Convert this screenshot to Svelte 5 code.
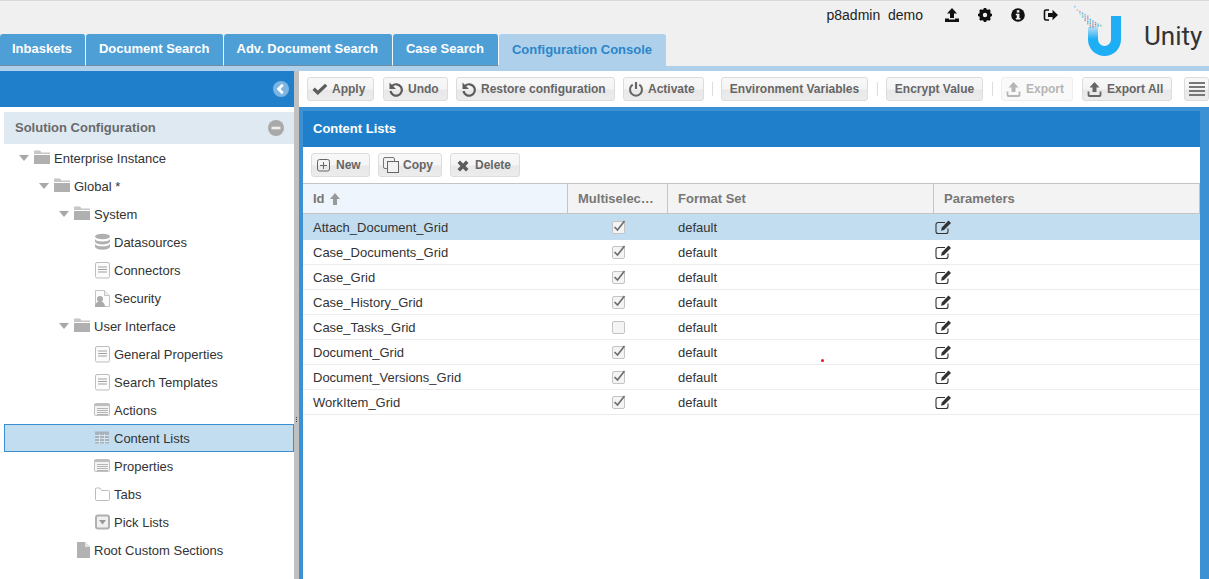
<script>
	const tabs = ['Inbaskets', 'Document Search', 'Adv. Document Search', 'Case Search', 'Configuration Console'];

	const tree = [
		{ label: 'Enterprise Instance', level: 0, icon: 'folder', open: true },
		{ label: 'Global *', level: 1, icon: 'folder', open: true },
		{ label: 'System', level: 2, icon: 'folder', open: true },
		{ label: 'Datasources', level: 3, icon: 'db' },
		{ label: 'Connectors', level: 3, icon: 'doc' },
		{ label: 'Security', level: 3, icon: 'secure' },
		{ label: 'User Interface', level: 2, icon: 'folder', open: true },
		{ label: 'General Properties', level: 3, icon: 'doc' },
		{ label: 'Search Templates', level: 3, icon: 'doc' },
		{ label: 'Actions', level: 3, icon: 'list' },
		{ label: 'Content Lists', level: 3, icon: 'grid', selected: true },
		{ label: 'Properties', level: 3, icon: 'list' },
		{ label: 'Tabs', level: 3, icon: 'tab' },
		{ label: 'Pick Lists', level: 3, icon: 'pick' },
		{ label: 'Root Custom Sections', level: 2, icon: 'file' }
	];

	const rows = [
		{ id: 'Attach_Document_Grid', multi: true, selected: true },
		{ id: 'Case_Documents_Grid', multi: true },
		{ id: 'Case_Grid', multi: true },
		{ id: 'Case_History_Grid', multi: true },
		{ id: 'Case_Tasks_Grid', multi: false },
		{ id: 'Document_Grid', multi: true },
		{ id: 'Document_Versions_Grid', multi: true },
		{ id: 'WorkItem_Grid', multi: true }
	];

	// particles fading off the top of the U
	const colors = ['#1eaef5', '#6cc4ee', '#c9687a', '#6fa8c2', '#d98a8a', '#3db4ee', '#83bd98'];
	const dots = [];
	for (let i = 0; i < 13; i++) {
		const span = Math.floor(i * 0.7);
		for (let k = 0; k <= span; k++) {
			if ((k + i) % 2 === 1) continue;
			dots.push({
				x: 2 + i * 1.3 + k * 1.3,
				y: 2 + i * 1.7 - k * 0.2,
				o: 0.55 + i * 0.035,
				c: colors[(k * 3 + i * 2) % colors.length]
			});
		}
	}
</script>

{#snippet treeIcon(name)}
	<svg class="ticon" width="18" height="18" viewBox="0 0 18 18">
		{#if name === 'folder'}
			<path d="M2 1.500h6l1.500 2H18V5H2z" fill="#c6c6c6" />
			<path d="M2 6h16v9H2z" fill="#b0b0b0" />
		{:else if name === 'db'}
			<ellipse cx="10.500" cy="3.500" rx="7.500" ry="2.800" fill="#b0b0b0" />
			<path d="M3 6c1 1.800 3.700 2.500 7.500 2.500S17 7.800 18 6v2.800c-1 1.800-3.700 2.600-7.500 2.600S4 10.600 3 8.800z" fill="#b0b0b0" />
			<path d="M3 10.700c1 1.800 3.700 2.600 7.500 2.600s6.500-.8 7.500-2.600v3.200c-1 1.800-3.700 2.800-7.500 2.800S4 15.700 3 13.900z" fill="#b0b0b0" />
		{:else if name === 'doc'}
			<rect x="3.500" y="1.500" width="14" height="15.500" rx="1.500" fill="#fbfbfb" stroke="#bdbdbd" />
			<path d="M6 6h9M6 8.500h9M6 11h9" stroke="#a0a0a0" />
		{:else if name === 'secure'}
			<path d="M3.500 1.500h9l5 5v11h-14z" fill="#fbfbfb" stroke="#c4c4c4" />
			<path d="M12.500 1.500v5h5" fill="#eee" stroke="#c4c4c4" />
			<circle cx="8" cy="10" r="3" fill="#aaa" />
			<path d="M3 18c0-3.500 2-5.500 5-5.500s5 2 5 5.500z" fill="#aaa" />
		{:else if name === 'list'}
			<rect x="2.500" y="2.500" width="15" height="12" rx="1" fill="#f3f3f3" stroke="#c0c0c0" />
			<path d="M2.500 3h15v2h-15z" fill="#bdbdbd" />
			<path d="M5 7.500h11M5 9.500h11M5 11.500h11M5 13.500h11" stroke="#b5b5b5" />
		{:else if name === 'grid'}
			<rect x="3" y="2.500" width="14" height="12" fill="#a7b3bc" />
			<path d="M3 6.500h14M3 9.500h14M3 12.500h14M7.500 5v10M12.500 5v10" stroke="#d6e4ee" />
		{:else if name === 'tab'}
			<path d="M3.500 14.500V4a1 1 0 0 1 1-1h3.500l1.500 2.500h7a1 1 0 0 1 1 1v8a1 1 0 0 1-1 1h-12a1 1 0 0 1-1-1z" fill="#fff" stroke="#bdbdbd" />
		{:else if name === 'pick'}
			<rect x="4" y="2.500" width="13" height="13" rx="2" fill="#f0f0f0" stroke="#b0b0b0" stroke-width="2" />
			<path d="M7 7h7l-3.500 4.500z" fill="#999" />
		{:else if name === 'file'}
			<path d="M5 1h8l5 5v11H5z" fill="#b2b2b2" />
			<path d="M13 1v5h5z" fill="#e2e2e2" />
		{/if}
	</svg>
{/snippet}

{#snippet btnIcon(name)}
	<svg class="bicon" width="16" height="16" viewBox="0 0 16 16">
		{#if name === 'check'}
			<path d="M.5 9l2.300-2.400 3 3L13 2.800 15.300 5 5.800 14z" fill="#5c5c5c" />
		{:else if name === 'undo'}
			<path d="M4.200 4.800A5.700 5.700 0 1 1 2.500 10" fill="none" stroke="#5c5c5c" stroke-width="2.200" />
			<path d="M1.500 1.500v6.500h6.500z" fill="#5c5c5c" />
		{:else if name === 'power'}
			<path d="M4.700 3.700a6 6 0 1 0 6.600 0" fill="none" stroke="#666" stroke-width="2" />
			<path d="M8 1v7" stroke="#666" stroke-width="2.200" />
		{:else if name === 'upload'}
			<path d="M7.500 1l5 5.500h-3V11h-4V6.500h-3z" fill="currentColor" />
			<path d="M1.500 10.500V14a1 1 0 0 0 1 1h10a1 1 0 0 0 1-1v-3.500" fill="none" stroke="currentColor" stroke-width="1.800" />
		{:else if name === 'new'}
			<rect x="1.500" y="2.500" width="12" height="11.500" rx="2" fill="none" stroke="#666" />
			<path d="M7.500 5v7M4 8.500h7" stroke="#666" />
		{:else if name === 'copy'}
			<rect x=".5" y=".5" width="11" height="11" rx="1.500" fill="#f2f2f2" stroke="#777" />
			<rect x="4.500" y="4.500" width="11" height="11" fill="#f2f2f2" stroke="#666" />
		{:else if name === 'delete'}
			<path d="M2.500 6l2.500-2.500 3 3 3-3L13.500 6l-3 3 3 3-2.500 2.500-3-3-3 3L2.500 12l3-3z" fill="#5c5c5c" />
		{/if}
	</svg>
{/snippet}

<div class="page">
	<header class="top">
		<div class="top-main">
			<div class="user">
				<span class="names">p8admin&nbsp;&nbsp;demo</span>
				<svg width="16" height="16" viewBox="0 0 16 16"><path d="M8 1l5 5.500H10V11H6V6.500H3z" fill="#111" /><path d="M1 11.500h4v1h6v-1h4V15H1z" fill="#111" /></svg>
				<svg width="16" height="16" viewBox="0 0 16 16"><circle cx="8" cy="8" r="4.500" fill="none" stroke="#111" stroke-width="3" /><path d="M8 1v14M1 8h14M3 3l10 10M13 3L3 13" stroke="#111" stroke-width="2.600" /><circle cx="8" cy="8" r="2.200" fill="#f0f0f0" /></svg>
				<svg width="16" height="16" viewBox="0 0 16 16"><circle cx="8" cy="8" r="6.800" fill="#111" /><rect x="6.800" y="3.200" width="2.600" height="2.400" fill="#f0f0f0" /><path d="M5.800 6.800h3.600v4.200h1v1.400H5.800V11h1V8.200h-1z" fill="#f0f0f0" /></svg>
				<svg width="16" height="16" viewBox="0 0 16 16"><path d="M6 3H3a1.500 1.500 0 0 0-1.500 1.500v7A1.500 1.500 0 0 0 3 13h3" fill="none" stroke="#111" stroke-width="1.600" /><path d="M9.500 2.800L15 8l-5.500 5.200V10H5V6h4.500z" fill="#111" /></svg>
			</div>
			<nav class="tabs">
				{#each tabs as tab, i}
					<div class="tab" class:active={i === 4}>{tab}</div>
				{/each}
			</nav>
		</div>
		<div class="brand">
			<svg class="logo" width="52" height="56" viewBox="0 0 52 56">
				<defs>
					<linearGradient id="arm" x1="0" y1="0" x2="0" y2="1">
						<stop offset="0" stop-color="#1eaef5" stop-opacity="0.25" />
						<stop offset="1" stop-color="#1eaef5" />
					</linearGradient>
				</defs>
				{#each dots as d}
					<rect x={d.x} y={d.y} width="1.500" height="1.500" fill={d.c} opacity={d.o} />
				{/each}
				<path d="M16 23h10v12H16z" fill="url(#arm)" />
				<path d="M16 35v.5a16.500 16.500 0 0 0 33 0V12H39v23.500a6.500 6.500 0 0 1-13 0V35z" fill="#1eaef5" />
			</svg>
			<span class="unity">Unity</span>
		</div>
	</header>
	<div class="band"></div>

	<div class="body">
		<aside class="side">
			<div class="side-head">
				<svg width="16" height="16" viewBox="0 0 16 16"><circle cx="8" cy="8" r="8" fill="#7db5e2" /><path d="M9.800 3.800L5.600 8l4.200 4.200" fill="none" stroke="#fff" stroke-width="2.800" /></svg>
			</div>
			<div class="acc">
				<span>Solution Configuration</span>
				<svg width="16" height="16" viewBox="0 0 16 16"><circle cx="8" cy="8" r="8" fill="#a9a9a9" /><rect x="3.500" y="6.700" width="9" height="2.600" fill="#eee" /></svg>
			</div>
			<div class="tree">
				{#each tree as node}
					<div class="node" class:selected={node.selected} style="padding-left: {50 + 20 * node.level}px">
						<span class="icons">
							{#if node.open}<i class="arrow"></i>{/if}
							{@render treeIcon(node.icon)}
						</span>
						<span>{node.label}</span>
					</div>
				{/each}
			</div>
		</aside>

		<div class="split"><i></i><i></i><i></i></div>

		<main class="main">
			<div class="toolbar">
				<button class="btn w-apply">{@render btnIcon('check')}Apply</button>
				<button class="btn w-undo">{@render btnIcon('undo')}Undo</button>
				<button class="btn w-restore">{@render btnIcon('undo')}Restore configuration</button>
				<button class="btn w-activate">{@render btnIcon('power')}Activate</button>
				<i class="sep"></i>
				<button class="btn plain w-env">Environment Variables</button>
				<i class="sep"></i>
				<button class="btn plain w-enc">Encrypt Value</button>
				<i class="sep"></i>
				<button class="btn off w-export">{@render btnIcon('upload')}Export</button>
				<button class="btn w-all">{@render btnIcon('upload')}Export All</button>
				<button class="btn plain menu">
					<svg width="16" height="14" viewBox="0 0 16 14"><path d="M0 1h16M0 5h16M0 9h16M0 13h16" stroke="#777" stroke-width="2" /></svg>
				</button>
			</div>

			<section class="panel">
				<h2>Content Lists</h2>
				<div class="panel-body">
					<div class="actions">
						<button class="btn w-new">{@render btnIcon('new')}New</button>
						<button class="btn w-copy">{@render btnIcon('copy')}Copy</button>
						<button class="btn w-del">{@render btnIcon('delete')}Delete</button>
					</div>
					<div class="grid-head">
						<div class="th sorted">Id
							<svg width="10" height="12" viewBox="0 0 10 12"><path d="M5 0l5 6H7v6H3V6H0z" fill="#999" /></svg>
						</div>
						<div class="th">Multiselec…</div>
						<div class="th">Format Set</div>
						<div class="th">Parameters</div>
					</div>
					{#each rows as row}
						<div class="row" class:selected={row.selected}>
							<div class="td">{row.id}</div>
							<div class="td center">
								<svg width="15" height="15" viewBox="0 0 15 15">
									<rect x="1.500" y="1.500" width="12" height="12" rx="1.500" fill="#f4f4f4" stroke="#c4c4c4" />
									{#if row.multi}<path d="M3.500 7l3 3 7-9" fill="none" stroke="#6e6e6e" stroke-width="1.700" />{/if}
								</svg>
							</div>
							<div class="td">default</div>
							<div class="td edit">
								<svg width="17" height="15" viewBox="0 0 17 15">
									<path d="M10 2.500H3a2 2 0 0 0-2 2v7a2 2 0 0 0 2 2h8a2 2 0 0 0 2-2V8.500" fill="none" stroke="#333" stroke-width="1.100" />
									<path d="M13.500 .5L16 3 9 10l-3 .8.800-3.300z" fill="#333" />
								</svg>
							</div>
						</div>
					{/each}
				</div>
			</section>
		</main>
	</div>
	<i class="speck"></i>
</div>

<style>
	:global(body) {
		margin: 0;
		overflow: hidden;
	}

	.page {
		position: relative;
		height: 579px;
		overflow: hidden;
		font-family: 'Liberation Sans', Arial, sans-serif;
		font-size: 13px;
		color: #333;
		background: #fff;
	}

	.top {
		display: flex;
		height: 66px;
		box-sizing: border-box;
		background: #f0f0f0;
		border-top: 1px solid #d9d9dd;
	}

	.top-main {
		flex: 1;
		display: flex;
		flex-direction: column;
	}

	.user {
		display: flex;
		align-items: center;
		justify-content: flex-end;
		height: 33px;
		padding: 0 13px 5px 0;
		box-sizing: border-box;
		gap: 17px;
	}

	.names {
		margin-right: 4px;
		color: #222;
		font-size: 14px;
	}

	.tabs {
		display: flex;
		height: 32px;
	}

	.tab {
		display: flex;
		align-items: center;
		padding: 0 14px 2px 13px;
		background: #4f9fd7;
		color: #fff;
		font-weight: bold;
		border-radius: 3px 3px 0 0;
		border-right: 1px solid #f4f8fb;
		border-bottom: 1px solid #6f8ea6;
		box-sizing: border-box;
	}

	.tab:first-child {
		padding: 0 13px 2px 12px;
	}

	.tab:nth-child(2) {
		padding-right: 13px;
	}

	.tab.active {
		background: #aed0ea;
		color: #2b86ca;
		border-bottom: 0;
		border-right: 0;
	}

	.brand {
		display: flex;
		flex: none;
		width: 137px;
		box-sizing: border-box;
		padding-top: 3px;
	}

	.logo {
		flex: none;
		margin-right: 20px;
	}

	.unity {
		font-family: Roboto, sans-serif;
		font-size: 26px;
		line-height: 64px;
		color: #333;
	}

	.band {
		height: 5px;
		background: #aed0ea;
	}

	.body {
		display: flex;
		height: 508px;
	}

	.side {
		width: 294px;
		flex: none;
	}

	.side-head {
		display: flex;
		align-items: center;
		justify-content: flex-end;
		height: 36px;
		padding-right: 5px;
		background: #1f7fca;
	}

	.acc {
		display: flex;
		align-items: center;
		justify-content: space-between;
		height: 32px;
		margin: 5px 0 0 4px;
		padding: 0 10px 1px 11px;
		box-sizing: border-box;
		background: #dfe9f2;
		color: #6a6a6a;
		font-weight: bold;
	}

	.node {
		position: relative;
		display: flex;
		align-items: center;
		height: 28px;
		margin-left: 4px;
		box-sizing: border-box;
		color: #333;
	}

	.node.selected {
		background: #c2ddf0;
		box-shadow: inset 0 0 0 1px #3b8fd0;
	}

	.icons {
		position: absolute;
		display: flex;
		align-items: center;
		margin-left: -22px;
		width: 18px;
	}

	.arrow {
		position: absolute;
		left: -13px;
		width: 0;
		height: 0;
		border-left: 5px solid transparent;
		border-right: 5px solid transparent;
		border-top: 6px solid #a8a8a8;
	}

	.ticon {
		flex: none;
	}

	.split {
		flex: none;
		width: 5px;
		background: #c0c0c0;
		display: flex;
		flex-direction: column;
		align-items: center;
		gap: 1px;
		padding-top: 346px;
		box-sizing: border-box;
	}

	.split i {
		width: 1px;
		height: 1px;
		background: #444;
	}

	.main {
		flex: 1;
		min-width: 0;
		display: flex;
		flex-direction: column;
	}

	.toolbar {
		display: flex;
		align-items: center;
		height: 36px;
		padding-left: 8px;
		box-sizing: border-box;
		white-space: nowrap;
	}

	.btn {
		display: inline-flex;
		align-items: center;
		gap: 4px;
		height: 24px;
		padding: 0 0 0 4px;
		flex: none;
		border: 1px solid #dcdcdc;
		border-radius: 3px;
		background: linear-gradient(#f8f8f8 0, #f4f4f4 50%, #e8e8e8 55%, #ececec 100%);
		color: #666;
		font: bold 12px 'Liberation Sans', Arial, sans-serif;
	}

	.btn.plain {
		justify-content: center;
		padding: 0;
	}

	.btn.off {
		color: #b5b5b5;
		background: #f9f9f9;
		border-color: #eee;
	}

	.w-apply { width: 67px; margin-right: 9px; }
	.w-undo { width: 65px; margin-right: 8px; }
	.w-restore { width: 159px; margin-right: 8px; }
	.w-activate { width: 81px; margin-right: -1px; }
	.w-env { width: 147px; }
	.w-enc { width: 97px; }
	.w-export { width: 72px; margin-right: 9px; }
	.w-all { width: 90px; margin-right: 12px; }
	.menu { width: 25px; }
	.w-new { width: 59px; margin-right: 8px; }
	.w-copy { width: 64px; margin-right: 8px; }
	.w-del { width: 70px; }

	.sep {
		flex: none;
		width: 1px;
		height: 14px;
		margin: 0 8px 0 9px;
		background: #ddd;
	}

	.panel {
		flex: 1;
		background: #3c90d4;
		padding: 4px 9px 0 4px;
		min-height: 0;
	}

	.panel h2 {
		margin: 0;
		height: 36px;
		line-height: 35px;
		padding-left: 10px;
		background: #1f7fca;
		color: #fff;
		font-size: 13px;
		font-weight: bold;
	}

	.panel-body {
		background: #fff;
		height: 100%;
	}

	.actions {
		display: flex;
		align-items: center;
		height: 36px;
		padding-left: 8px;
	}

	.grid-head,
	.row {
		display: grid;
		grid-template-columns: 265px 100px 266px 266px;
	}

	.grid-head {
		height: 31px;
		box-sizing: border-box;
		border-top: 1px solid #c4c4c4;
		border-bottom: 1px solid #c4c4c4;
	}

	.th {
		display: flex;
		align-items: center;
		gap: 5px;
		padding-left: 10px;
		background: #f3f3f3;
		border-right: 1px solid #c4c4c4;
		color: #777;
		font-weight: bold;
		white-space: nowrap;
	}

	.th.sorted {
		background: #eef5fc;
	}

	.row {
		height: 25px;
		box-sizing: border-box;
		border-bottom: 1px solid #ececec;
	}

	.row.selected {
		height: 26px;
		background: #c2ddf0;
		border-bottom: 0;
	}

	.td {
		display: flex;
		align-items: center;
		padding-left: 10px;
		color: #333;
	}

	.td.center {
		justify-content: center;
		padding-left: 0;
	}

	.td.edit {
		padding-left: 1px;
	}

	.speck {
		position: absolute;
		left: 821px;
		top: 359px;
		width: 3px;
		height: 3px;
		border-radius: 50%;
		background: #f0101a;
	}
</style>
